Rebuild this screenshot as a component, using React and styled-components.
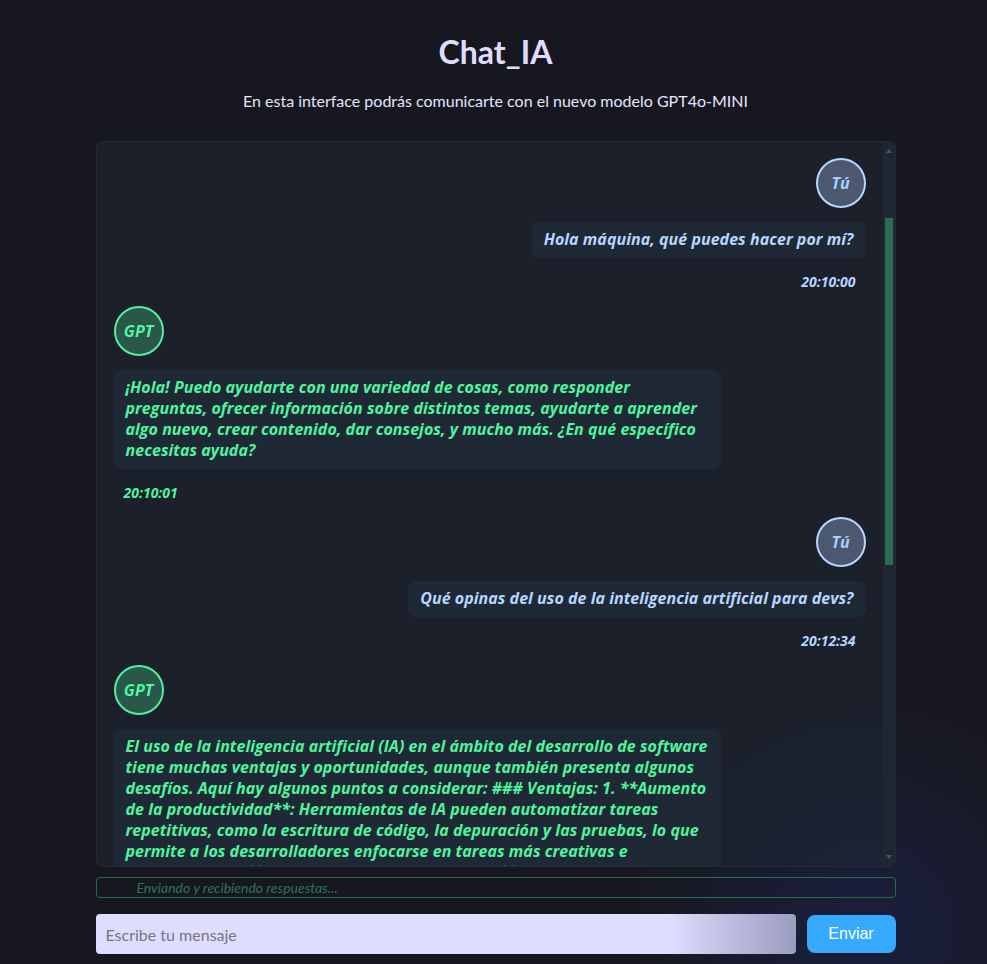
import { useLayoutEffect, useRef, useState } from 'react';
import styled, { createGlobalStyle, css } from 'styled-components';

const GlobalStyle = createGlobalStyle`
html, body {
  margin:0;
  padding:0;
}
body {
  min-height:100vh;
  background-color:#17181f;
  background-image:radial-gradient(circle 230px at 862px 928px, #1a1f3e 0%, rgba(23,24,31,0) 100%);
  font-family:Lato, "Open Sans", sans-serif;
}
* {
  box-sizing:border-box;
}
`

const Page = styled.div`
display:flex;
flex-direction:column;
align-items:center;
padding:33px 0 0 4px;
`

const Title = styled.h1`
margin:0;
font-size:32px;
line-height:38px;
font-weight:700;
color:#e0dcff;
`

const Subtitle = styled.p`
margin:19px 0 30px 0;
font-size:16px;
line-height:21px;
color:#e6e4ff;
`

const ChatBox = styled.div`
width:800px;
height:726px;
display:flex;
overflow:hidden;
background-color:rgba(31,40,52,0.55);
border:1px solid #212a35;
border-radius:6px;
`

const Scroller = styled.div`
flex:1;
overflow-y:scroll;
scrollbar-width:none;
&::-webkit-scrollbar {
  display:none;
}
`

const Track = styled.div`
width:12px;
display:flex;
flex-direction:column;
background-color:#1e2733;
`

const Arrow = styled.div`
height:14px;
display:flex;
justify-content:center;
align-items:${p => p.$down ? 'flex-start' : 'flex-end'};
padding:${p => p.$down ? '3px 0 0 0' : '0 0 3px 0'};
&::before {
  content:"";
  border-left:3.5px solid transparent;
  border-right:3.5px solid transparent;
  ${p => p.$down ? 'border-top:4px solid #2e6b50;' : 'border-bottom:4px solid #2e6b50;'}
}
`

const ThumbArea = styled.div`
flex:1;
position:relative;
`

const Thumb = styled.div`
position:absolute;
left:2px;
right:2px;
background-color:#2e6b50;
`

const MessageList = styled.div`
display:flex;
flex-direction:column;
gap:14px;
padding:145px 17px 16px 17px;
`

const Group = styled.div`
display:flex;
flex-direction:column;
gap:14px;
align-items:${p => p.$user ? 'flex-end' : 'flex-start'};
`

const userColors = css`
background-color:#4b5870;
border-color:#b8d6ff;
color:#a9cfff;
`

const gptColors = css`
background-color:#29574a;
border-color:#52f0a0;
color:#52f5a0;
`

const Avatar = styled.div`
width:50px;
height:50px;
border-radius:50%;
border:2px solid;
display:flex;
align-items:center;
justify-content:center;
font-family:"Open Sans", Lato, sans-serif;
font-size:16px;
font-weight:700;
font-style:italic;
${p => p.$user ? userColors : gptColors}
`

const Bubble = styled.div`
max-width:607px;
padding:7px 12px 8px 12px;
border-radius:8px;
background-color:#1f2935;
font-family:"Open Sans", Lato, sans-serif;
font-size:16px;
line-height:21px;
letter-spacing:0.04px;
font-weight:700;
font-style:italic;
color:${p => p.$user ? '#b6d6ff' : '#4ef59e'};
`

const Time = styled.div`
font-family:"Open Sans", Lato, sans-serif;
font-size:14px;
line-height:20px;
font-weight:700;
font-style:italic;
padding:0 10px;
color:${p => p.$user ? '#b6d6ff' : '#4ef59e'};
`

const Status = styled.div`
width:800px;
margin-top:10px;
height:21px;
border:1px solid #2a6b4a;
border-radius:4px;
padding:0 0 0 40px;
font-size:14px;
line-height:19px;
font-style:italic;
color:#2f7451;
`

const InputRow = styled.div`
width:800px;
display:flex;
align-items:center;
gap:11px;
margin-top:16px;
`

const Input = styled.input`
flex:1;
height:40px;
border:none;
border-radius:4px;
padding:0 10px;
outline:none;
font-family:Lato, "Open Sans", sans-serif;
font-size:16px;
color:#333;
background:linear-gradient(to right, #dedcff 0%, #dedcff 82%, #9a9cc0 100%);
&::placeholder {
  color:#77767f;
}
`

const SendButton = styled.button`
width:89px;
height:38px;
border:none;
border-radius:8px;
background-color:#36aaff;
color:#fff;
font-family:"Liberation Sans", Arial, sans-serif;
font-size:16px;
cursor:pointer;
`

const longAnswer = `El uso de la inteligencia artificial (IA) en el ámbito del desarrollo de software tiene muchas ventajas y oportunidades, aunque también presenta algunos desafíos. Aquí hay algunos puntos a considerar: ### Ventajas: 1. **Aumento de la productividad**: Herramientas de IA pueden automatizar tareas repetitivas, como la escritura de código, la depuración y las pruebas, lo que permite a los desarrolladores enfocarse en tareas más creativas e innovadoras. 2. **Mejora de la calidad del código**: Los asistentes basados en IA pueden sugerir mejores prácticas, detectar errores comunes y vulnerabilidades de seguridad antes de que el código llegue a producción. 3. **Aprendizaje acelerado**: Los desarrolladores que están aprendiendo un nuevo lenguaje o framework pueden obtener explicaciones, ejemplos y respuestas rápidas a sus dudas. 4. **Análisis de datos**: La IA facilita el procesamiento de grandes volúmenes de información, ayudando a tomar decisiones basadas en datos sobre el rendimiento y el uso de las aplicaciones. 5. **Documentación**: La IA puede generar y mantener documentación técnica actualizada, lo que ahorra tiempo y mejora la comunicación dentro de los equipos. ### Desafíos: 1. **Dependencia excesiva**: Confiar demasiado en las herramientas de IA puede limitar el desarrollo de habilidades fundamentales y la comprensión profunda del código. 2. **Calidad variable**: Las sugerencias generadas no siempre son correctas u óptimas, por lo que es necesario revisarlas con cuidado. 3. **Privacidad y seguridad**: Compartir código propietario con servicios externos puede suponer riesgos para la confidencialidad de los proyectos. 4. **Cuestiones éticas**: El uso de modelos entrenados con código de terceros plantea preguntas sobre licencias y propiedad intelectual. 5. **Impacto en el empleo**: Algunas personas temen que la automatización reduzca la demanda de ciertos perfiles, aunque también surgen nuevos roles relacionados con la IA. ### Conclusión: La inteligencia artificial es una herramienta poderosa que, bien utilizada, puede potenciar el trabajo de los desarrolladores. La clave está en usarla como un complemento y no como un sustituto del conocimiento y el criterio profesional, manteniendo siempre una actitud crítica y responsable frente a sus resultados.`

const messages = [
    { user: true, text: 'Hola máquina, qué puedes hacer por mí?', time: '20:10:00' },
    { user: false, text: '¡Hola! Puedo ayudarte con una variedad de cosas, como responder preguntas, ofrecer información sobre distintos temas, ayudarte a aprender algo nuevo, crear contenido, dar consejos, y mucho más. ¿En qué específico necesitas ayuda?', time: '20:10:01' },
    { user: true, text: 'Qué opinas del uso de la inteligencia artificial para devs?', time: '20:12:34' },
    { user: false, text: longAnswer, time: '20:12:40' },
]

const App = () => {
    const boxRef = useRef(null);
    const [thumb, setThumb] = useState({ top: 0, height: 0 });

    useLayoutEffect(() => {
        const el = boxRef.current;
        if (!el) return;
        el.scrollTop = 129;
        const track = el.clientHeight - 28;
        const height = Math.max(20, track * el.clientHeight / el.scrollHeight);
        const max = el.scrollHeight - el.clientHeight;
        const top = max > 0 ? (el.scrollTop / max) * (track - height) : 0;
        setThumb({ top, height });
    }, []);

    return <>
        <GlobalStyle />
        <Page>
            <Title>Chat_IA</Title>
            <Subtitle>En esta interface podrás comunicarte con el nuevo modelo GPT4o-MINI</Subtitle>
            <ChatBox>
                <Scroller ref={boxRef}>
                    <MessageList>
                        {messages.map((m, i) => (
                            <Group key={i} $user={m.user}>
                                <Avatar $user={m.user}>{m.user ? 'Tú' : 'GPT'}</Avatar>
                                <Bubble $user={m.user}>{m.text}</Bubble>
                                <Time $user={m.user}>{m.time}</Time>
                            </Group>
                        ))}
                    </MessageList>
                </Scroller>
                <Track>
                    <Arrow />
                    <ThumbArea>
                        <Thumb style={{ top: thumb.top, height: thumb.height }} />
                    </ThumbArea>
                    <Arrow $down />
                </Track>
            </ChatBox>
            <Status>Enviando y recibiendo respuestas...</Status>
            <InputRow>
                <Input placeholder="Escribe tu mensaje" />
                <SendButton>Enviar</SendButton>
            </InputRow>
        </Page>
    </>
}

export default App;
